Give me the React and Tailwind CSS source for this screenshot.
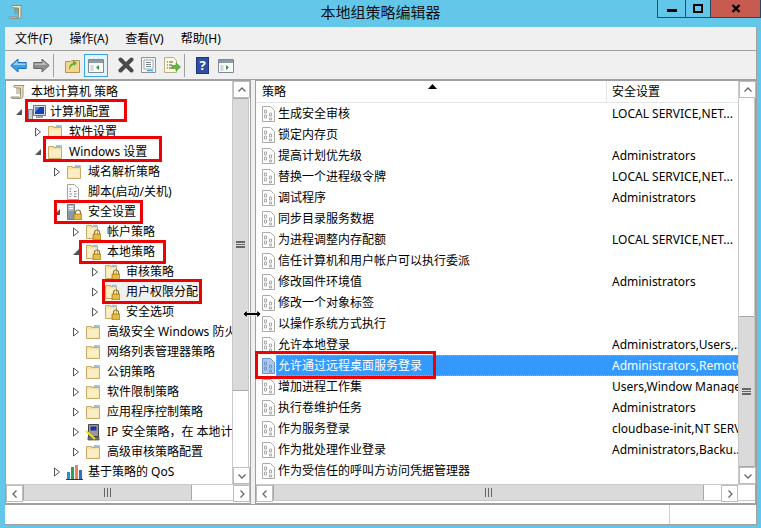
import React from "react";

const Folder = () => (
  <svg width="16" height="16" viewBox="0 0 16 16">
    <path d="M1.5 2.5h5v1h8v11h-13z" fill="#f8e3a6" stroke="#c8ab66" />
    <path d="M2.5 5.5h11v8h-11z" fill="#fbeec5" />
    <path d="M9 1.5h5.5v2H9z" fill="#9cc0df" stroke="#c8ab66" strokeWidth="0.6" />
  </svg>
);

const Lock = () => (
  <>
    <path d="M9.5 10V8.5a2.5 2.5 0 0 1 5 0V10" fill="none" stroke="#8a7a4a" strokeWidth="1.2" />
    <path d="M8 10h8v6H8z" fill="#d9a92e" stroke="#a67c1a" strokeWidth="0.7" />
    <path d="M9 12h6M9 14h6" stroke="#f4d878" strokeWidth="0.8" />
  </>
);

const LockFolder = () => (
  <svg width="16" height="16" viewBox="0 0 16 16">
    <path d="M1.5 1.5h5v1h6v12h-11z" fill="#f8e3a6" stroke="#c8ab66" />
    <path d="M2.5 4.5h9v9h-9z" fill="#fbeec5" />
    <path d="M8 .8h4.5v2H8z" fill="#9cc0df" />
    <Lock />
  </svg>
);

const ScrollIcon = () => (
  <svg width="16" height="16" viewBox="0 0 16 16">
    <path d="M4 1.5h10c-1 1-1 2-1 3v7c0 2-1 3-2.500 3H2.500c-1 0-1.500-.6-1.500-1.500h8c0 .8.500 1.200 1 1 .6-.3.500-1 .500-2V4C4 4 3 3 4 1.500z" fill="#f3e6bd" stroke="#8d846a" strokeWidth="0.9" />
    <path d="M6 5h5M6 7h5M6 9h5" stroke="#8d846a" strokeWidth="0.9" />
  </svg>
);

const ComputerIcon = () => (
  <svg width="18" height="16" viewBox="0 0 18 16">
    <path d="M.5 5.500h4v10h-4z" fill="#c9ced6" stroke="#7c8794" />
    <path d="M5.500 1.500h12v10h-12z" fill="#d7dde5" stroke="#6d7885" />
    <path d="M7 3h9v7H7z" fill="#1740b5" />
    <path d="M7 3h5l-5 5z" fill="#5d8ae6" />
    <path d="M8 12h7v2H8z" fill="#9aa3ae" />
  </svg>
);

const ScriptIcon = () => (
  <svg width="14" height="16" viewBox="0 0 14 16">
    <path d="M1.500.5h7l4 4v11h-11z" fill="#fbfbfb" stroke="#a4a4a4" />
    <path d="M3.500 5h2M3.500 7.500h1.500M8 7.500h2.500M3.500 10h2.500M8 10h2.500M3.500 12.500h1.500M8 12.500h2.500" stroke="#8a8a8a" />
  </svg>
);

const ServerLockIcon = () => (
  <svg width="16" height="16" viewBox="0 0 16 16">
    <path d="M1.500.5h7v15h-7z" fill="#aeb9c4" stroke="#6e7a87" />
    <path d="M3 2.500h4M3 4.500h4" stroke="#fff" />
    <path d="M2 7h6v8H2z" fill="#8b98a6" />
    <Lock />
  </svg>
);

const IpIcon = () => (
  <svg width="16" height="18" viewBox="0 0 16 18">
    <path d="M3.500 1.500h10v12h-10z" fill="#9a9a92" stroke="#44443f" />
    <path d="M5.500 3.500h6v4h-6z" fill="#1b2fb0" />
    <path d="M3 14h11v3H3z" fill="#77776f" stroke="#44443f" strokeWidth="0.7" />
    <path d="M1 8l3 2.500M3 10l7 6" stroke="#f0e020" strokeWidth="2" />
  </svg>
);

const ChartIcon = () => (
  <svg width="17" height="16" viewBox="0 0 17 16">
    <path d="M0 15h17v1H0z" fill="#333" />
    <path d="M1 8h3v7H1z" fill="#1f8fd8" />
    <path d="M5 3h3v12H5z" fill="#2e9c52" />
    <path d="M9 1h3v14H9z" fill="#f0805a" />
    <path d="M13 6h3v9h-3z" fill="#2a70c8" />
  </svg>
);

const PolicyIcon = ({ selected }) => {
  const line = selected ? "#6e93c4" : "#ababab";
  return (
    <svg width="14" height="16" viewBox="0 0 14 16">
      <path d="M.5.500h8l4 4v11H.500z" fill={selected ? "#a9c9ee" : "#fff"} stroke={line} />
      <path d="M2.500 4h2v3h-2zM7.500 7h2v3h-2zM2.500 9h2v3h-2zM7.500 12h2v2h-2z" fill="none" stroke={line} />
    </svg>
  );
};

const ArrowBack = ({ gray }) => (
  <svg width="17" height="15" viewBox="0 0 17 15">
    <path
      d="M.8 7.500L8 1v3.500h8.200v6H8V14z"
      fill={gray ? "#8f8f8f" : "#37a0ea"}
      stroke={gray ? "#666" : "#1c6fc0"}
    />
    <path d="M3 7L7.500 3v2.500h8V7z" fill={gray ? "#bdbdbd" : "#9bd6fb"} />
  </svg>
);

const PanelIcon = ({ arrow, active }) => (
  <svg width="16" height="15" viewBox="0 0 16 15">
    <path d="M.5 1.500h15v13H.5z" fill="#fbfbfb" stroke="#7d8a94" />
    <path d="M1 2h14v3H1z" fill="#8d9aa5" />
    <path d="M2.500 7h3v6h-3z" fill="#cdd6dd" />
    <path d={active ? "M11 7v5L8 9.500z" : "M8 7v5l3-2.500z"} fill={arrow} />
  </svg>
);

const Toolbar = () => (
  <div className="flex h-[29px] items-center bg-[#f0f0f0] border-b border-[#a0a0a0] pl-[5px]">
    <ArrowBack />
    <span className="ml-[6px] -scale-x-100 flex">
      <ArrowBack gray />
    </span>
    <div className="ml-[3px] h-[23px] w-px bg-[#a0a0a0]" />
    <svg className="ml-[11px]" width="15" height="16" viewBox="0 0 15 16">
      <path d="M.5 4.500h5l1-1h8v12H.500z" fill="#f3d68e" stroke="#b39455" />
      <path d="M4 13c0-4 1-6 4-7V3.500L12 6l-3 3V7.500C7 8 5.500 10 4 13z" fill="#4fb52f" />
    </svg>
    <div className="ml-[4px] flex h-[23px] w-[24px] items-center justify-center border border-[#3aa3e3] bg-[#e5f3fb]">
      <PanelIcon arrow="#2f9a35" active />
    </div>
    <svg className="ml-[10px]" width="16" height="16" viewBox="0 0 16 16">
      <path d="M2.500 2.500l11 11M13.500 2.500l-11 11" stroke="#4a4a4a" strokeWidth="4" strokeLinecap="round" />
    </svg>
    <svg className="ml-[7px]" width="15" height="16" viewBox="0 0 15 16">
      <path d="M.5.500h14v15H.500z" fill="#f4f4f4" stroke="#8a929a" />
      <path d="M3 3h9v9H3z" fill="#fff" stroke="#a0a8b0" />
      <path d="M5 5.500h5M5 7.500h5M5 9.500h5" stroke="#7b8894" />
      <path d="M6 13.500h6" stroke="#45a8e0" strokeWidth="1.500" />
    </svg>
    <svg className="ml-[8px]" width="17" height="16" viewBox="0 0 17 16">
      <path d="M.5.500h9l3 3v12H.500z" fill="#fbf6dd" stroke="#b8b08a" />
      <path d="M3 5h1M5 5h4M3 8h1M5 8h3M3 11h1M5 11h3" stroke="#555" />
      <path d="M8 8.500h4V6l4.500 4-4.500 4v-2.500H8z" fill="#63b93b" stroke="#3f8a24" strokeWidth="0.6" />
    </svg>
    <div className="ml-[3px] h-[23px] w-px bg-[#a0a0a0]" />
    <div className="ml-[11px] flex h-[17px] w-[13px] items-center justify-center bg-[#2f4fa5] border border-[#1e3480] text-[13px] leading-none font-bold text-white">
      ?
    </div>
    <span className="ml-[9px] flex">
      <PanelIcon arrow="#2f9a35" />
    </span>
  </div>
);

const Triangle = ({ open }) =>
  open ? (
    <svg width="8" height="8" viewBox="0 0 8 8">
      <path d="M7 1v6H1z" fill="#555" />
    </svg>
  ) : (
    <svg width="8" height="10" viewBox="0 0 8 10">
      <path d="M1.500 1v8l5-4z" fill="#fff" stroke="#555" />
    </svg>
  );

const iconMap = {
  folder: Folder,
  lock: LockFolder,
  scroll: ScrollIcon,
  computer: ComputerIcon,
  script: ScriptIcon,
  server: ServerLockIcon,
  ip: IpIcon,
  chart: ChartIcon,
};

const indent = {
  1: "pl-[8px]",
  2: "pl-[27px]",
  3: "pl-[46px]",
  4: "pl-[65px]",
  5: "pl-[84px]",
};

const treeRows = [
  { level: 1, tri: "open", icon: "computer", label: "计算机配置" },
  { level: 2, tri: "closed", icon: "folder", label: "软件设置" },
  { level: 2, tri: "open", icon: "folder", label: "Windows 设置" },
  { level: 3, tri: "closed", icon: "folder", label: "域名解析策略" },
  { level: 3, icon: "script", label: "脚本(启动/关机)" },
  { level: 3, tri: "open", icon: "server", label: "安全设置" },
  { level: 4, tri: "closed", icon: "lock", label: "帐户策略" },
  { level: 4, tri: "open", icon: "lock", label: "本地策略" },
  { level: 5, tri: "closed", icon: "lock", label: "审核策略" },
  { level: 5, tri: "closed", icon: "lock", label: "用户权限分配", selected: true },
  { level: 5, tri: "closed", icon: "lock", label: "安全选项" },
  { level: 4, tri: "closed", icon: "folder", label: "高级安全 Windows 防火墙 - 本地组策略对象" },
  { level: 4, icon: "folder", label: "网络列表管理器策略" },
  { level: 4, tri: "closed", icon: "folder", label: "公钥策略" },
  { level: 4, tri: "closed", icon: "folder", label: "软件限制策略" },
  { level: 4, tri: "closed", icon: "folder", label: "应用程序控制策略" },
  { level: 4, tri: "closed", icon: "ip", label: "IP 安全策略，在 本地计算机" },
  { level: 4, tri: "closed", icon: "folder", label: "高级审核策略配置" },
  { level: 3, tri: "closed", icon: "chart", label: "基于策略的 QoS" },
];

const policyRows = [
  ["生成安全审核", "LOCAL SERVICE,NET..."],
  ["锁定内存页", ""],
  ["提高计划优先级", "Administrators"],
  ["替换一个进程级令牌", "LOCAL SERVICE,NET..."],
  ["调试程序", "Administrators"],
  ["同步目录服务数据", ""],
  ["为进程调整内存配额", "LOCAL SERVICE,NET..."],
  ["信任计算机和用户帐户可以执行委派", ""],
  ["修改固件环境值", "Administrators"],
  ["修改一个对象标签", ""],
  ["以操作系统方式执行", ""],
  ["允许本地登录", "Administrators,Users,..."],
  ["允许通过远程桌面服务登录", "Administrators,Remote Desktop Users"],
  ["增加进程工作集", "Users,Window Manager"],
  ["执行卷维护任务", "Administrators"],
  ["作为服务登录", "cloudbase-init,NT SERVICE"],
  ["作为批处理作业登录", "Administrators,Backu..."],
  ["作为受信任的呼叫方访问凭据管理器", ""],
];

const Chevron = ({ className }) => (
  <svg className={className} width="10" height="10" viewBox="0 0 10 10">
    <path d="M1.500 6.500L5 3l3.500 3.500" fill="none" stroke="#666" strokeWidth="1.300" />
  </svg>
);

const ScrollBtn = ({ dir }) => {
  const rotate = { up: "", down: "rotate-180", left: "-rotate-90", right: "rotate-90" }[dir];
  return (
    <div className="flex h-[17px] w-[17px] shrink-0 items-center justify-center border border-[#bdbdbd] bg-white">
      <Chevron className={rotate} />
    </div>
  );
};

const VScroll = ({ trackBefore, trackAfter, thumb }) => (
  <div className="flex w-[17px] shrink-0 flex-col bg-white border-x border-[#c8c8c8]">
    <ScrollBtn dir="up" />
    <div className={trackBefore} />
    <div className={`flex items-center justify-center border-y border-[#a8a8a8] bg-[#dadada] ${thumb}`}>
      <div className="h-[7px] w-[9px] border-y-2 border-[#666] flex items-center">
        <div className="h-[1px] w-full bg-[#666]" />
      </div>
    </div>
    <div className={trackAfter} />
    <ScrollBtn dir="down" />
  </div>
);

const HScroll = ({ thumb, after }) => (
  <div className="flex h-[17px] shrink-0 bg-white border-y border-[#c8c8c8]">
    <ScrollBtn dir="left" />
    <div className={`flex items-center justify-center border-x border-[#a8a8a8] bg-[#dadada] ${thumb}`}>
      <div className="flex h-[9px] w-[7px] justify-between">
        <div className="w-px bg-[#666]" />
        <div className="w-px bg-[#666]" />
        <div className="w-px bg-[#666]" />
      </div>
    </div>
    <div className={after} />
    <ScrollBtn dir="right" />
  </div>
);

const TreeRow = ({ row }) => {
  const Icon = iconMap[row.icon];
  return (
    <div className={`flex h-[20px] items-center whitespace-nowrap ${indent[row.level]}`}>
      <span className="flex w-[14px] shrink-0 justify-start pl-[1px]">
        {row.tri && <Triangle open={row.tri === "open"} />}
      </span>
      <span className={`flex h-[20px] items-center ${row.selected ? "bg-[#f0f0f0] pr-[2px]" : ""}`}>
        <span className="flex w-[20px] shrink-0 items-center">
          <Icon />
        </span>
        <span className="ml-[2px]">{row.label}</span>
      </span>
    </div>
  );
};

const PolicyRow = ({ name, value }) => {
  const selected = name.startsWith("允许通过");
  return (
    <div className="flex h-[21px] items-center whitespace-nowrap pl-[6px]">
      <span className="flex w-[14px] shrink-0">
        <PolicyIcon selected={selected} />
      </span>
      <div
        className={`flex h-[21px] flex-1 items-center border pl-[1px] ${
          selected ? "border-dotted border-[#d8a060] bg-[#3399ff] text-white" : "border-transparent"
        }`}
      >
        <span className="w-[334px] shrink-0">{name}</span>
        <span className="w-[126px] overflow-hidden">{value}</span>
      </div>
    </div>
  );
};

const RedBox = ({ className }) => (
  <div className={`absolute border-[3px] border-[#f00000] ${className}`} />
);

export default function App() {
  return (
    <div className="relative flex h-[528px] w-[761px] flex-col overflow-hidden bg-[#63c7ea] text-[12px] leading-none text-black font-['Noto_Sans','Noto_Sans_CJK_SC',sans-serif]">
      <div className="flex h-[27px] shrink-0">
        <div className="flex-1">
          <div className="ml-[8px] mt-[4px] w-[16px]">
            <ScrollIcon />
          </div>
        </div>
        <div className="pt-[3px] text-[15px] leading-[18px] text-[#111]">本地组策略编辑器</div>
        <div className="flex flex-1 items-start justify-end">
          <div className="flex h-[18px] border-x border-b border-[#28495a]">
            <div className="flex w-[28px] items-center justify-center border-r border-[#28495a]">
              <div className="mt-[3px] h-[3px] w-[10px] bg-black" />
            </div>
            <div className="flex w-[25px] items-center justify-center border-r border-[#28495a]">
              <div className="h-[9px] w-[10px] border-2 border-black" />
            </div>
            <div className="flex w-[49px] items-center justify-center bg-[#c75b50]">
              <svg width="10" height="9" viewBox="0 0 10 9">
                <path d="M1.500 1l7 7M8.500 1l-7 7" stroke="#000" strokeWidth="2.400" />
              </svg>
            </div>
          </div>
        </div>
      </div>

      <div className="ml-[5px] mr-[4px] flex h-[498px] flex-col border-r border-b border-[#a0a0a0] bg-[#f0f0f0]">
        <div className="flex h-[24px] shrink-0 items-center gap-[17px] border-b border-[#a0a0a0] pl-[10px] pt-[1px]">
          <span>文件(F)</span>
          <span>操作(A)</span>
          <span>查看(V)</span>
          <span>帮助(H)</span>
        </div>

        <Toolbar />

        <div className="flex h-[424px] shrink-0 justify-between">
          <div className="flex w-[246px] flex-col border border-[#a0a0a0] bg-white">
            <div className="flex h-[403px]">
              <div className="w-[226px] overflow-hidden pt-[1px]">
                <div className="flex h-[20px] items-center pl-[4px]">
                  <span className="flex w-[20px] shrink-0">
                    <ScrollIcon />
                  </span>
                  <span className="ml-[1px]">本地计算机 策略</span>
                </div>
                {treeRows.map((row) => (
                  <TreeRow key={row.label} row={row} />
                ))}
              </div>
              <VScroll trackBefore="h-0" thumb="h-[293px]" trackAfter="flex-1" />
            </div>
            <HScroll thumb="w-[169px]" after="flex-1" />
          </div>

          <div className="flex w-[501px] flex-col border border-[#a0a0a0] bg-white">
            <div className="flex h-[403px]">
              <div className="w-[482px] overflow-hidden">
                <div className="relative flex h-[22px] items-center border-b border-[#e5e5e5]">
                  <span className="w-[350px] pl-[6px]">策略</span>
                  <span className="h-[21px] w-px bg-[#e5e5e5]" />
                  <span className="pl-[5px]">安全设置</span>
                  <svg className="absolute left-[172px] top-[3px]" width="9" height="5" viewBox="0 0 9 5">
                    <path d="M4.500 0L9 5H0z" fill="#000" />
                  </svg>
                </div>
                {policyRows.map(([name, value]) => (
                  <PolicyRow key={name} name={name} value={value} />
                ))}
              </div>
              <VScroll trackBefore="h-[218px]" thumb="flex-1" trackAfter="h-0" />
            </div>
            <HScroll thumb="w-[431px]" after="w-[17px]" />
          </div>
        </div>

        <div className="flex flex-1 justify-end border-t border-[#a0a0a0] bg-white">
          <div className="w-[87px] border-l border-[#d0d0d0]" />
        </div>
      </div>

      <RedBox className="left-[25px] top-[99px] h-[23px] w-[102px]" />
      <RedBox className="left-[43px] top-[136px] h-[26px] w-[119px]" />
      <RedBox className="left-[54px] top-[200px] h-[24px] w-[89px]" />
      <RedBox className="left-[79px] top-[240px] h-[24px] w-[87px]" />
      <RedBox className="left-[102px] top-[279px] h-[25px] w-[100px]" />
      <RedBox className="left-[255px] top-[351px] h-[28px] w-[181px]" />

      <svg className="absolute left-[242px] top-[309px]" width="20" height="10" viewBox="0 0 20 10">
        <path d="M1 5l4-4v2.500h10V1l4 4-4 4V6.500H5V9z" fill="#000" stroke="#fff" strokeWidth="0.800" />
      </svg>
    </div>
  );
}
